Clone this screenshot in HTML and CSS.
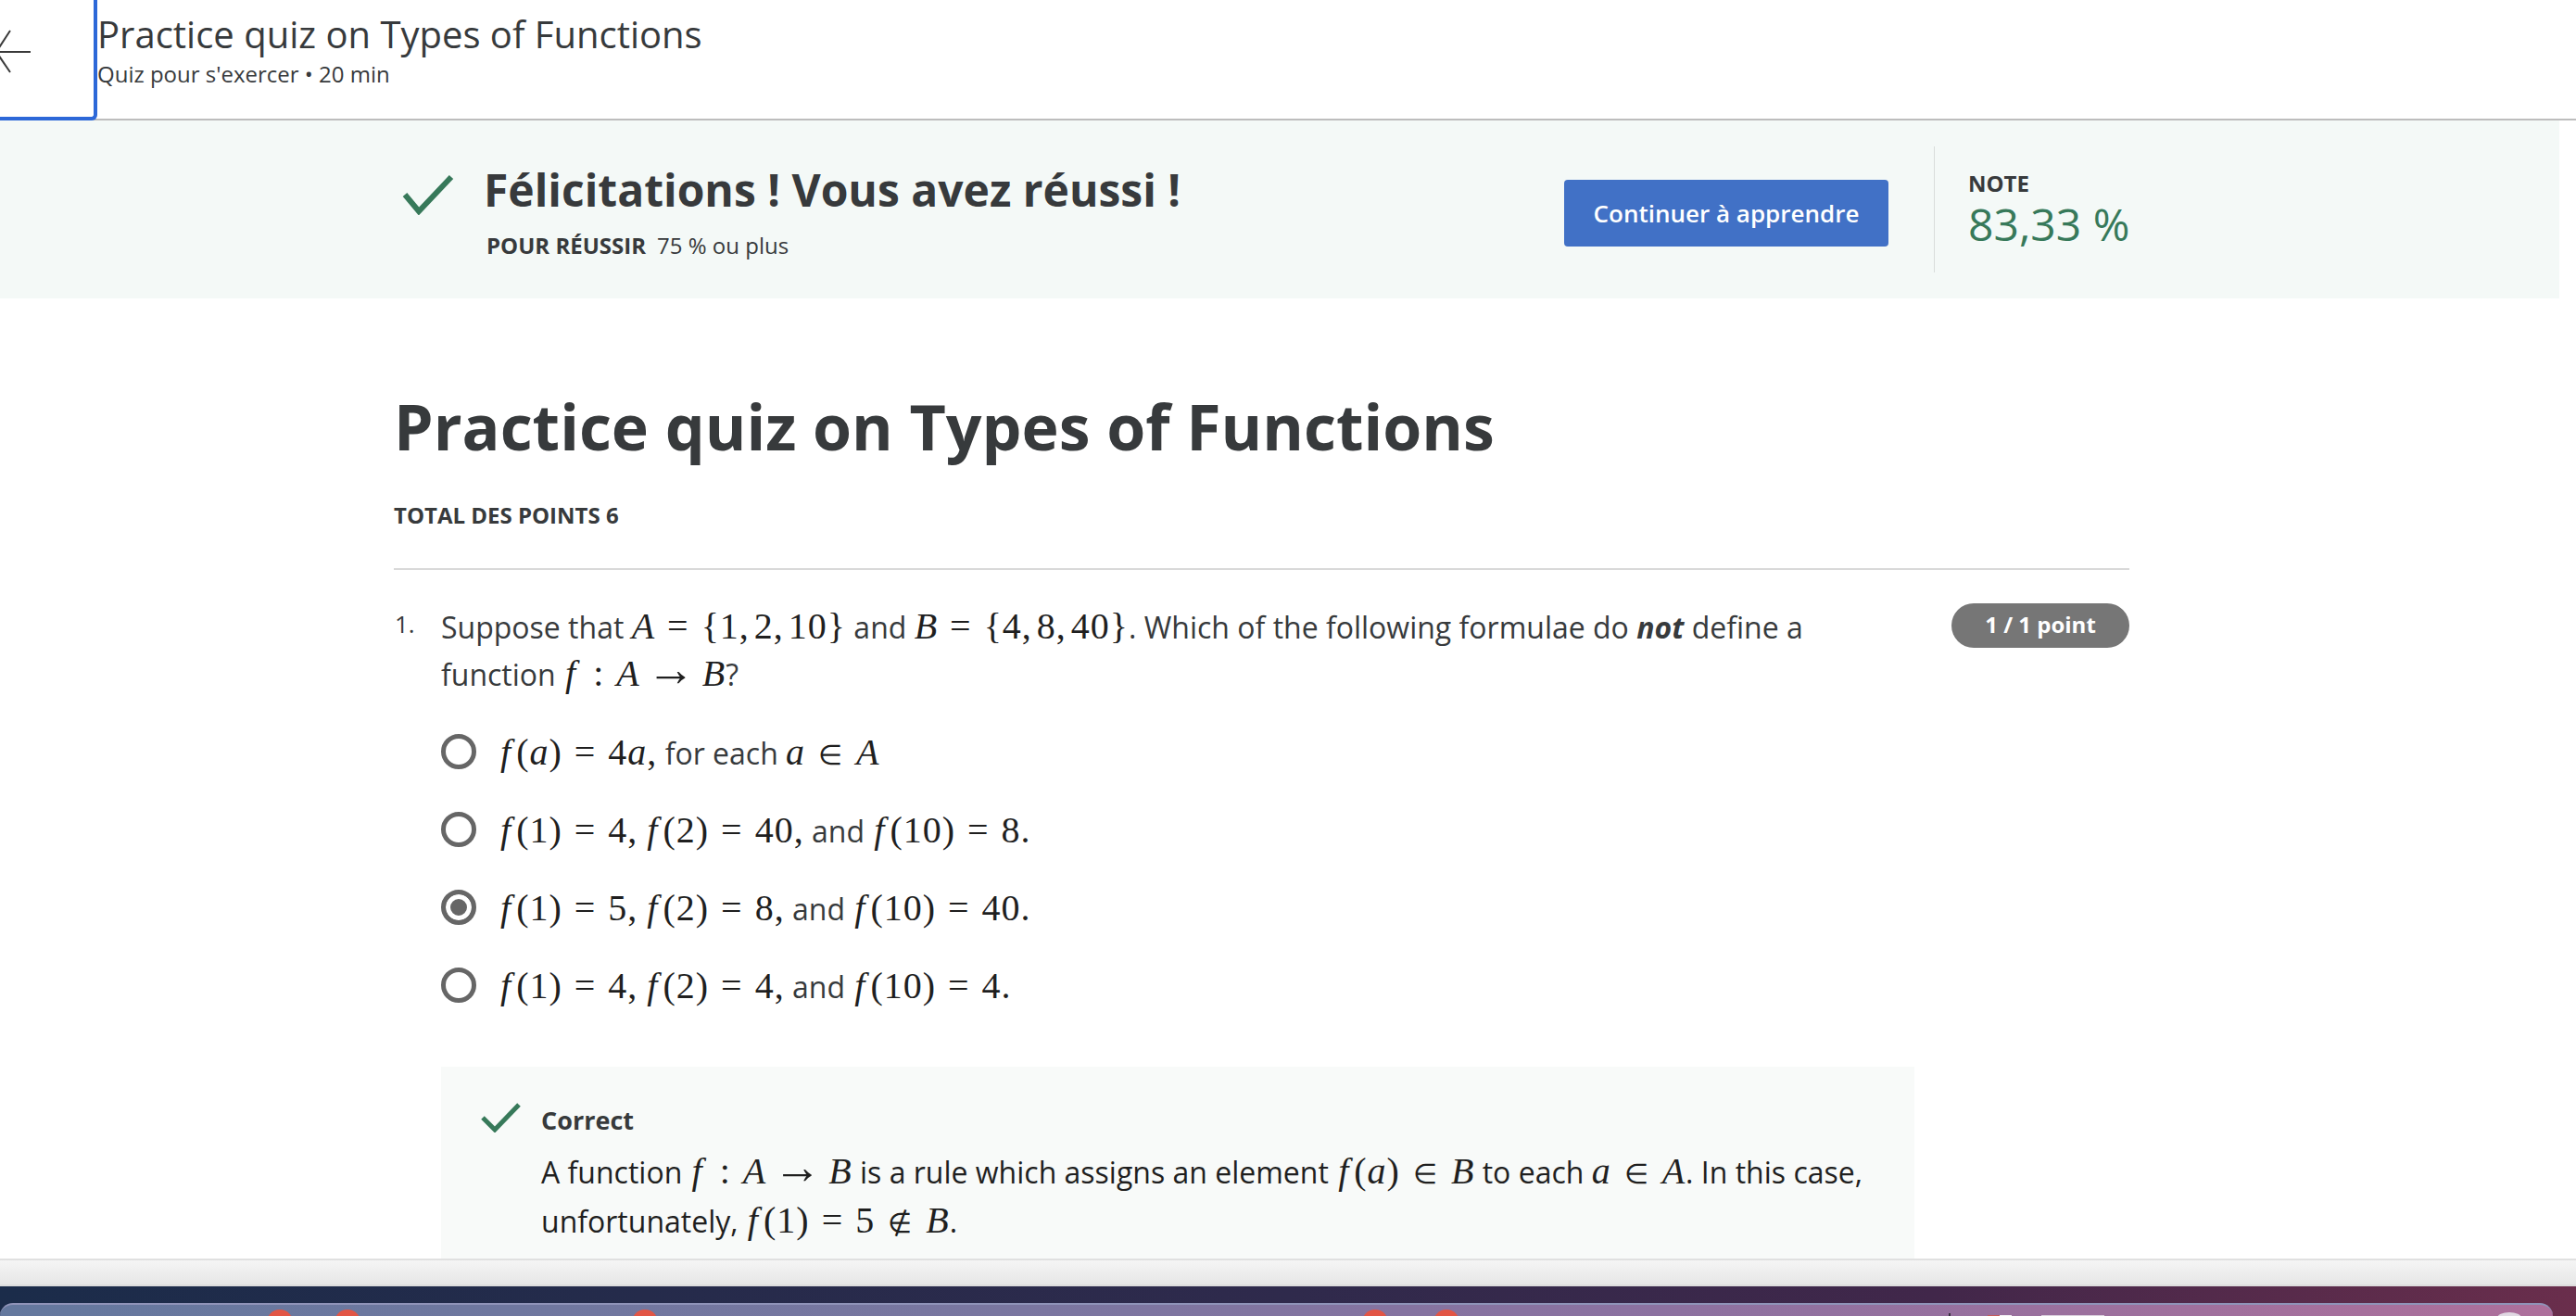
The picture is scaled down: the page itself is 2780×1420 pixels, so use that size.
FILE: index.html
```html
<!DOCTYPE html>
<html lang="en">
  <head>
    <meta name="viewport" content="width=device-width, initial-scale=1.0">
    <title>Practice quiz on Types of Functions</title>
    <link rel="stylesheet" href="styles.css">
  </head>
  <body>
    <header class="topBar">
      <button class="backButton" aria-label="Back">
        <svg width="101" height="126" viewBox="0 0 101 126">
          <path d="M33 56H-4M11 33L-4 56L11 78" fill="none" stroke="#3a3a3a" stroke-width="2"/>
        </svg>
      </button>
      <div class="topTitles">
        <div class="topTitle">Practice quiz on Types of Functions</div>
        <div class="topSub">Quiz pour s'exercer • 20 min</div>
      </div>
    </header>

    <section class="banner">
      <svg class="bannerCheck" width="56" height="44" viewBox="0 0 56 44">
        <path d="M3 22L18 40L53 3" fill="none" stroke="#37795a" stroke-width="6"/>
      </svg>
      <div class="bannerText">
        <h2 class="bannerTitle">Félicitations ! Vous avez réussi !</h2>
        <div class="bannerPass"><b>POUR RÉUSSIR</b><span>75 % ou plus</span></div>
      </div>
      <button class="continueButton">Continuer à apprendre</button>
      <div class="gradeBox">
        <div class="gradeLabel">NOTE</div>
        <div class="gradeValue">83,33 %</div>
      </div>
    </section>

    <main class="content">
      <h1 class="quizTitle">Practice quiz on Types of Functions</h1>
      <div class="totalPoints">TOTAL DES POINTS 6</div>
      <hr class="divider">

      <div class="question">
        <div class="questionNumber">1.</div>
        <div class="questionBody">
          <div class="questionHead">
            <p class="questionText">Suppose that <span class="math set"><i>A</i><span class="rel">=</span>{1, 2, 10}</span> and <span class="math set"><i>B</i><span class="rel">=</span>{4, 8, 40}</span>. Which of the following formulae do <b><i>not</i></b> define a function <span class="math"><i class="fn">f</i><span class="rel">:</span><i>A</i><span class="rel arrow">→</span><i>B</i></span>?</p>
            <div class="pointsPill">1 / 1 point</div>
          </div>

          <ul class="options">
            <li class="option"><span class="radio"></span><span><span class="math"><i class="fn">f</i>(<i>a</i>)<span class="rel">=</span>4<i>a</i>,</span> for each <span class="math"><i>a</i><span class="rel member">∈</span><i>A</i></span></span></li>
            <li class="option"><span class="radio"></span><span><span class="math"><i class="fn">f</i>(1)<span class="rel">=</span>4, <i class="fn">f</i>(2)<span class="rel">=</span>40,</span> and <span class="math"><i class="fn">f</i>(10)<span class="rel">=</span>8.</span></span></li>
            <li class="option"><span class="radio checked"></span><span><span class="math"><i class="fn">f</i>(1)<span class="rel">=</span>5, <i class="fn">f</i>(2)<span class="rel">=</span>8,</span> and <span class="math"><i class="fn">f</i>(10)<span class="rel">=</span>40.</span></span></li>
            <li class="option"><span class="radio"></span><span><span class="math"><i class="fn">f</i>(1)<span class="rel">=</span>4, <i class="fn">f</i>(2)<span class="rel">=</span>4,</span> and <span class="math"><i class="fn">f</i>(10)<span class="rel">=</span>4.</span></span></li>
          </ul>

          <div class="feedback">
            <svg class="feedbackCheck" width="44" height="32" viewBox="0 0 44 32">
              <path d="M2 16L15 29L41 2" fill="none" stroke="#37795a" stroke-width="5"/>
            </svg>
            <div>
              <div class="feedbackTitle">Correct</div>
              <p class="feedbackText">A function <span class="math"><i class="fn">f</i><span class="rel">:</span><i>A</i><span class="rel arrow">→</span><i>B</i></span> is a rule which assigns an element <span class="math"><i class="fn">f</i>(<i>a</i>)<span class="rel member">∈</span><i>B</i></span> to each <span class="math"><i>a</i><span class="rel member">∈</span><i>A</i></span>. In this case, unfortunately, <span class="math"><i class="fn">f</i>(1)<span class="rel">=</span>5<span class="rel member">∉</span><i>B</i></span>.</p>
            </div>
          </div>
        </div>
      </div>
    </main>

    <div class="browserBar"></div>

    <div class="desktop">
      <div class="desktopWindow">
        <span class="dot dot1"></span>
        <span class="dot dot2"></span>
        <span class="dot dot3"></span>
        <span class="dot dot4"></span>
        <span class="dot dot5"></span>
        <span class="tick"></span>
        <span class="redMark"></span>
        <span class="greyBar"></span>
        <span class="whiteMark"></span>
      </div>
    </div>
  </body>
</html>
```

FILE: styles.css
```css
*{
  box-sizing: border-box;
}
html, body{
  margin: 0;
  height: 1420px;
  overflow: hidden;
}
body{
  display: flex;
  flex-direction: column;
  background-color: white;
  color: #373a3c;
  font-family: "Open Sans", "Liberation Sans", sans-serif;
}

/* top bar */
.topBar{
  display: flex;
  flex: none;
  height: 130px;
  border-bottom: 2px solid #bdbdbd;
}
.backButton{
  flex: none;
  width: 105px;
  height: 130px;
  padding: 0;
  background-color: white;
  border: none;
  border-right: 4px solid #2d68d8;
  border-bottom: 4px solid #2d68d8;
  border-bottom-right-radius: 6px;
  overflow: hidden;
}
.backButton svg{
  display: block;
}
.topTitles{
  padding-top: 10px;
}
.topTitle{
  font-size: 40px;
  line-height: 54px;
}
.topSub{
  font-size: 24px;
  line-height: 32px;
}

/* result banner */
.banner{
  display: flex;
  flex: none;
  align-items: flex-start;
  width: 2762px;
  height: 192px;
  background-color: #f4f9f7;
}
.bannerCheck{
  flex: none;
  margin-top: 58px;
  margin-left: 434px;
}
.bannerText{
  width: 1166px;
  margin-left: 32px;
}
.bannerTitle{
  margin: 0;
  padding-top: 42px;
  font-size: 48px;
  line-height: 66px;
  font-weight: 700;
}
.bannerPass{
  display: flex;
  gap: 12px;
  margin-left: 3px;
  margin-top: 11px;
  font-size: 24px;
  line-height: 32px;
}
.continueButton{
  flex: none;
  width: 350px;
  height: 72px;
  margin-top: 64px;
  background-color: #4171c6;
  border: none;
  border-radius: 4px;
  color: white;
  font-family: inherit;
  font-size: 26px;
  font-weight: 550;
}
.gradeBox{
  flex: none;
  height: 136px;
  margin-top: 28px;
  margin-left: 49px;
  padding-left: 36px;
  border-left: 1px solid #d8dcda;
}
.gradeLabel{
  margin-top: 24px;
  font-size: 24px;
  line-height: 32px;
  font-weight: 700;
}
.gradeValue{
  margin-top: -2px;
  color: #37795a;
  font-size: 48px;
  line-height: 60px;
}

/* quiz content */
.content{
  flex: 1;
  min-height: 0;
  overflow: hidden;
  padding-left: 425px;
  width: 2298px;
}
.quizTitle{
  margin: 0;
  padding-top: 90px;
  font-size: 68px;
  line-height: 96px;
  font-weight: 700;
}
.totalPoints{
  margin-top: 32px;
  font-size: 24px;
  line-height: 32px;
  font-weight: 700;
}
.divider{
  margin: 41px 0 0;
  border: none;
  border-top: 2px solid #d9d9d9;
}
.question{
  display: flex;
  margin-top: 36px;
}
.questionNumber{
  flex: none;
  width: 51px;
  padding-left: 1px;
  font-size: 26px;
  line-height: 44px;
}
.questionBody{
  flex: 1;
  min-width: 0;
}
.questionHead{
  display: flex;
  justify-content: space-between;
  align-items: flex-start;
}
.questionText{
  width: 1560px;
  margin: 0;
  font-size: 32px;
  line-height: 50px;
}
.pointsPill{
  flex: none;
  width: 192px;
  height: 48px;
  background-color: #767676;
  border-radius: 24px;
  color: white;
  font-size: 24px;
  line-height: 46px;
  font-weight: 700;
  text-align: center;
}
.options{
  list-style-type: none;
  margin: 16px 0 0;
  padding: 0;
}
.option{
  display: flex;
  align-items: center;
  gap: 24px;
  height: 84px;
  font-size: 32px;
}
.radio{
  flex: none;
  width: 38px;
  height: 38px;
  border: 5px solid #666666;
  border-radius: 50%;
  background-color: white;
}
.radio.checked{
  background-color: #666666;
  box-shadow: inset 0 0 0 5px white;
}
.feedback{
  display: flex;
  width: 1590px;
  height: 208px;
  margin-top: 46px;
  padding: 36px 0 0 43px;
  gap: 21px;
  background-color: #f8faf9;
  color: #1f1f1f;
}
.feedbackCheck{
  flex: none;
  margin-top: 3px;
}
.feedbackTitle{
  color: #373a3c;
  font-size: 27px;
  line-height: 44px;
  font-weight: 700;
}
.feedbackText{
  width: 1450px;
  margin: 8px 0 0;
  font-size: 32px;
  line-height: 50px;
}

/* typeset maths */
.math{
  font-family: "Liberation Serif", serif;
  font-size: 40px;
  letter-spacing: 1px;
  word-spacing: -3px;
  color: #1f1f1f;
  white-space: nowrap;
}
.math.set{
  word-spacing: -6px;
}
.fn{
  padding-left: 2px;
  padding-right: 5px;
}
.rel{
  margin: 0 13px;
}
.arrow{
  margin: 0 7px;
  font-size: 52px;
  line-height: 0;
}
.member{
  margin: 0 14px;
  font-size: 30px;
}

/* bottom of the capture */
.browserBar{
  flex: none;
  height: 30px;
  background: linear-gradient(#f5f5f5, #e6e6e6);
  border-top: 2px solid #e0e0e0;
  border-bottom: 2px solid #dddddd;
}
.desktop{
  flex: none;
  height: 32px;
  padding-top: 18px;
  background: linear-gradient(90deg, #1b2c4a, #2f2a4c 50%, #41274a 75%, #6a2e4c);
}
.desktopWindow{
  position: relative;
  height: 14px;
  width: 2755px;
  overflow: hidden;
  background: linear-gradient(90deg, #64789e, #7a76a0 40%, #8c71a0 65%, #ad6f9b);
  border-top: 2px solid #8f93b8;
  border-radius: 14px 14px 0 0;
}
.dot{
  position: absolute;
  top: 5px;
  width: 28px;
  height: 28px;
  background-color: #e25545;
  border-radius: 50%;
}
.dot1{ left: 288px; }
.dot2{ left: 361px; }
.dot3{ left: 682px; }
.dot4{ left: 1470px; }
.dot5{ left: 1547px; }
.tick{
  position: absolute;
  left: 2103px;
  top: 9px;
  width: 2px;
  height: 6px;
  background-color: #3a3040;
}
.redMark{
  position: absolute;
  left: 2145px;
  top: 11px;
  width: 26px;
  height: 4px;
  background: linear-gradient(90deg, #c65a5a 50%, #f2eef2 50%);
}
.greyBar{
  position: absolute;
  left: 2203px;
  top: 11px;
  width: 68px;
  height: 4px;
  background-color: #d9cfdc;
}
.whiteMark{
  position: absolute;
  left: 2695px;
  top: 8px;
  width: 26px;
  height: 12px;
  background-color: #e0d8e2;
  border-radius: 50% 50% 0 0;
}
```
